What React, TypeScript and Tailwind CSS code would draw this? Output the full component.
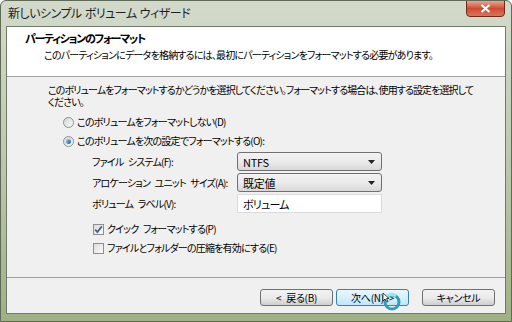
import React from 'react';

// ── Small Win7-style controls ──────────────────────────────────────────

function Radio({ checked }: { checked?: boolean }) {
  return (
    <span className="w-[11px] h-[11px] rounded-full border border-[#8e8f8f] bg-gradient-to-br from-[#d6d6d6] to-[#fbfbfb] flex items-center justify-center flex-shrink-0">
      {checked && <span className="w-[5px] h-[5px] rounded-full bg-gradient-to-br from-[#8ad0f2] to-[#1b5c9e]" />}
    </span>
  );
}

function Check({ checked }: { checked?: boolean }) {
  return (
    <span className="w-[11px] h-[11px] border border-[#8e8f8f] bg-gradient-to-br from-[#dcdcdc] to-[#fbfbfb] flex items-center justify-center flex-shrink-0">
      {checked && (
        <svg width="9" height="9" viewBox="0 0 9 9">
          <path d="M1.2 4.6 L3.4 7 L7.8 1.4" fill="none" stroke="#4a5f97" strokeWidth="1.8" />
        </svg>
      )}
    </span>
  );
}

function Combo({ value }: { value: string }) {
  return (
    <div className="w-[145px] h-[19px] border border-[#707070] rounded-[3px] bg-gradient-to-b from-[#f2f2f2] via-[#ebebeb] to-[#d8d8d8] flex items-center pl-[5px] pr-[6px]">
      <span className="flex-1 text-[11px] leading-[12px] tracking-[-0.3px] text-black">{value}</span>
      <svg width="7" height="4" viewBox="0 0 7 4">
        <path d="M0 0 H7 L3.5 4 Z" fill="#222" />
      </svg>
    </div>
  );
}

function Button({ label, hot }: { label: string; hot?: boolean }) {
  return (
    <div
      className={`w-[73px] h-[17px] rounded-[3px] border flex items-center justify-center text-[10px] leading-[12px] tracking-[-0.3px] text-black ${
        hot
          ? 'border-[#3c7fb1] bg-gradient-to-b from-[#eaf6fd] via-[#d9f0fc] to-[#bee6fd]'
          : 'border-[#707070] bg-gradient-to-b from-[#f2f2f2] via-[#ebebeb] to-[#cfcfcf]'
      }`}
    >
      {label}
    </div>
  );
}

// ── Page ───────────────────────────────────────────────────────────────

export default function App() {
  return (
    <div className="relative w-[512px] h-[322px] overflow-hidden rounded-t-[6px] border border-[#5f6b57] bg-gradient-to-b from-[#d3dacb] via-[#bcc8ae] to-[#9fb085] font-['Noto_Sans_CJK_JP',sans-serif] [font-feature-settings:'palt'] text-[10px] tracking-[-0.8px] [word-spacing:3px]">
      {/* title bar */}
      <div className="h-[25px] pl-[7px] pt-[5px] text-[12px] leading-[14px] tracking-[-0.5px] [word-spacing:1px] text-[#1e1e1e]">
        新しいシンプル ボリューム ウィザード
      </div>
      <div className="absolute top-[-1px] right-[6px] w-[39px] h-[17px] rounded-b-[4px] border border-[#6e2a1c] bg-gradient-to-b from-[#e9a48f] via-[#cf4a30] to-[#d8765a] flex items-center justify-center">
        <svg width="11" height="9" viewBox="0 0 11 9">
          <path d="M1.5 1 L9.5 8 M9.5 1 L1.5 8" stroke="#fff" strokeWidth="2.2" />
        </svg>
      </div>

      {/* client */}
      <div className="mx-[5px] h-[288px] border border-[#6f7b68] flex flex-col">
        <div className="h-[50px] bg-white border-b border-[#a0a0a0]">
          <div className="pt-[5px] pl-[18px] text-[11px] leading-[13px] tracking-[-1.3px] font-bold text-black">パーティションのフォーマット</div>
          <div className="mt-[4px] pl-[37px] leading-[12px] text-black">
            このパーティションにデータを格納するには、最初にパーティションをフォーマットする必要があります。
          </div>
        </div>

        <div className="h-[201px] bg-[#f0f0f0] border-b border-[#a0a0a0] pt-[7px] text-black">
          <div className="pl-[41px] leading-[12px] tracking-[-0.9px]">
            このボリュームをフォーマットするかどうかを選択してください。フォーマットする場合は、使用する設定を選択して
            <br />
            ください。
          </div>

          <div className="mt-[6px] pl-[56px] flex flex-col gap-[3px]">
            <div className="h-[16px] flex items-center gap-[3px]">
              <Radio />
              <span className="leading-[12px]">このボリュームをフォーマットしない(D)</span>
            </div>
            <div className="h-[16px] flex items-center gap-[3px]">
              <Radio checked />
              <span className="leading-[12px]">このボリュームを次の設定でフォーマットする(O):</span>
            </div>
          </div>

          <div className="mt-[3px] pl-[85px] grid grid-cols-[145px_145px] gap-y-[2px]">
            <div className="h-[19px] flex items-center leading-[12px]">ファイル システム(F):</div>
            <Combo value="NTFS" />
            <div className="h-[19px] flex items-center leading-[12px]">アロケーション ユニット サイズ(A):</div>
            <Combo value="既定値" />
            <div className="h-[19px] flex items-center leading-[12px]">ボリューム ラベル(V):</div>
            <div className="w-[145px] h-[19px] border border-[#dadada] bg-white flex items-center pl-[5px] text-[11px] leading-[12px]">
              ボリューム
            </div>
          </div>

          <div className="mt-[8px] pl-[86px] flex flex-col gap-[3px]">
            <div className="h-[16px] flex items-center gap-[3px]">
              <Check checked />
              <span className="leading-[12px]">クイック フォーマットする(P)</span>
            </div>
            <div className="h-[16px] flex items-center gap-[3px]">
              <Check />
              <span className="leading-[12px]">ファイルとフォルダーの圧縮を有効にする(E)</span>
            </div>
          </div>
        </div>

        <div className="flex-1 bg-[#f0f0f0] flex justify-end items-start pt-[11px] pr-[10px]">
          <Button label="< 戻る(B)" />
          <div className="ml-[3px]">
            <Button label="次へ(N) >" hot />
          </div>
          <div className="ml-[13px]">
            <Button label="キャンセル" />
          </div>
        </div>
      </div>

      {/* busy cursor over the next button */}
      <svg className="absolute left-[381px] top-[291px]" width="20" height="20" viewBox="0 0 20 20">
        <circle cx="10" cy="10" r="7" fill="none" stroke="#2f9fb6" strokeWidth="3" />
        <path d="M3.5 6 A7 7 0 0 1 14 4" fill="none" stroke="#9fe3ef" strokeWidth="3" />
        <path d="M1 1 L1 9 L3 7 L5 10 L6 9.5 L4.5 6.5 L7 6.5 Z" fill="#fff" stroke="#000" strokeWidth="0.7" />
      </svg>
    </div>
  );
}
